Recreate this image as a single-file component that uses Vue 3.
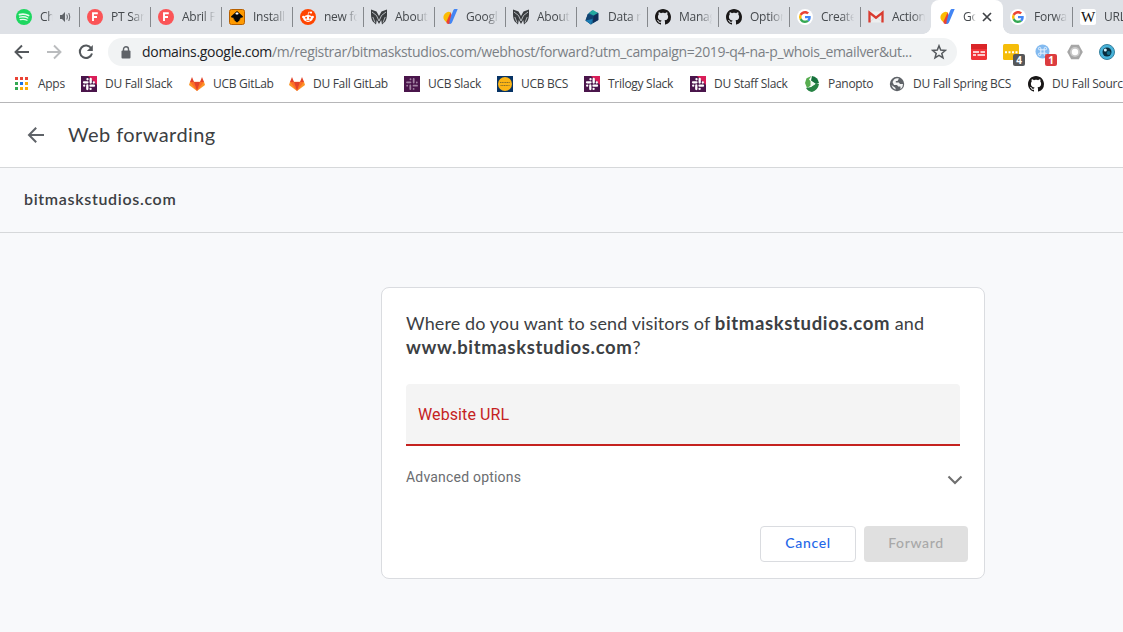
<script setup>
const tabs = [
  { icon: 'spotify', text: 'Chi', audio: true },
  { icon: 'fonts', text: 'PT Sans' },
  { icon: 'fonts', text: 'Abril Fa' },
  { icon: 'inkscape', text: 'Install' },
  { icon: 'reddit', text: 'new fo' },
  { icon: 'mask', text: 'About' },
  { icon: 'domains', text: 'Googl' },
  { icon: 'mask', text: 'About' },
  { icon: 'data', text: 'Data m' },
  { icon: 'github', text: 'Manag' },
  { icon: 'github', text: 'Option' },
  { icon: 'google', text: 'Create' },
  { icon: 'gmail', text: 'Action' },
  { icon: 'domains', text: 'Go', active: true },
  { icon: 'google', text: 'Forwar' },
  { icon: 'wiki', text: 'URL' },
]
const bookmarks = [
  { icon: 'apps', text: 'Apps', w: 67 },
  { icon: 'slack', text: 'DU Fall Slack', w: 108 },
  { icon: 'gitlab', text: 'UCB GitLab', w: 100 },
  { icon: 'gitlab', text: 'DU Fall GitLab', w: 115 },
  { icon: 'slackdim', text: 'UCB Slack', w: 93 },
  { icon: 'bcs', text: 'UCB BCS', w: 87 },
  { icon: 'slack', text: 'Trilogy Slack', w: 106 },
  { icon: 'slack', text: 'DU Staff Slack', w: 114 },
  { icon: 'panopto', text: 'Panopto', w: 85 },
  { icon: 'globe', text: 'DU Fall Spring BCS', w: 139 },
  { icon: 'github', text: 'DU Fall Sourc', w: 120 },
]
</script>

<template>
  <div class="window">
    <svg class="defs" width="0" height="0">
      <symbol id="spotify" viewBox="0 0 16 16">
        <circle cx="8" cy="8" r="8" fill="#1ed760" />
        <g fill="none" stroke="#e9fbef" stroke-linecap="round">
          <path d="M3.4 5.6Q8.2 4.2 12.6 6.5" stroke-width="1.7" />
          <path d="M3.8 8.2Q8 7 11.8 9" stroke-width="1.4" />
          <path d="M4.2 10.7Q8 9.7 11 11.3" stroke-width="1.2" />
        </g>
      </symbol>
      <symbol id="fonts" viewBox="0 0 16 16">
        <circle cx="8" cy="8" r="8" fill="#fb5457" />
        <path d="M6 12V4.3h4.8M6 8h4" fill="none" stroke="#fff" stroke-width="1.9" />
      </symbol>
      <symbol id="inkscape" viewBox="0 0 16 16">
        <rect x=".5" y=".5" width="15" height="15" rx="2" fill="#ff9a00" stroke="#b65f00" />
        <path d="M8 2 13.800 7.200q.6.900-.5 1.300l-2.500.4 1 1-1.300.5v1L8 13.500l-2.500-2v-1.100L4 10l1.200-1-2.500-.5q-1.100-.4-.5-1.300z" fill="#080808" />
        <path d="m8 3 2.200 2.200-1.200-.2-1 .9-1-.9-1.200.2z" fill="#fff" />
      </symbol>
      <symbol id="reddit" viewBox="0 0 16 16">
        <circle cx="8" cy="8" r="8" fill="#ff4500" />
        <ellipse cx="8" cy="9.4" rx="4.8" ry="3.5" fill="#fff" />
        <circle cx="3.3" cy="8" r="1.2" fill="#fff" /><circle cx="12.7" cy="8" r="1.2" fill="#fff" />
        <circle cx="11" cy="3.6" r="1.1" fill="#fff" />
        <path d="m8 6 .7-3 2.3.6" fill="none" stroke="#fff" stroke-width=".7" />
        <circle cx="6.1" cy="8.8" r=".95" fill="#ff4500" /><circle cx="9.9" cy="8.8" r=".95" fill="#ff4500" />
        <path d="M6 11q2 1.3 4 0" fill="none" stroke="#ff4500" stroke-width=".7" />
      </symbol>
      <symbol id="mask" viewBox="0 0 16 16">
        <path d="M0 .5 5.500 2.500 8 7l2.500-4.500L16 .5c.3 5-.1 9.500-1.800 12L11 15.500 10.200 11 8 15l-2.200-4-.8 4.500-3.200-3C.1 10-.3 5.500 0 .5z" fill="#3a3d40" />
        <path d="m1 3 4.500 3.500L8 12l2.500-5.500L15 3M1.800 8l2.200 5.500M14.200 8 12 13.500" fill="none" stroke="#dee1e6" stroke-width=".75" />
      </symbol>
      <symbol id="domains" viewBox="0 0 16 16">
        <path d="M8.600 3.200A5.200 5.200 0 1 0 5 13.300c1.500-.3 4.500-5.500 3.600-10.100z" fill="#fbbc04" />
        <path d="M8.700 3.200 4.600 12.300c-.6 1.500.3 2.800 1.900 2.800 1.100 0 1.700-.6 2.200-1.600l2-4.500z" fill="#ea4335" />
        <path d="M11.300 1.300C11.700.4 12.300 0 13.200 0h2.500L10.200 12.900C9.600 14.300 8.700 15 7.300 15.100L6.500 15c1.100-.4 1.500-1.500 1-2.600L9 7z" fill="#4285f4" />
      </symbol>
      <symbol id="data" viewBox="0 0 16 16">
        <path d="M8 1.500 14.300 4v7L7 15.500l-5.500-4L3.800 5z" fill="#155c87" />
        <path d="M9 1 14 4 9.300 6.500 5 4z" fill="#23a99f" /><path d="m3.800 5 5.500 1.800L7 15.500l-5.500-4z" fill="#114270" /><path d="m1.500 11.500 7-1.500L7 15.500z" fill="#1b7cb4" />
        <path d="M9.300 7 14.300 4v7L9 14z" fill="#122e58" />
      </symbol>
      <symbol id="github" viewBox="0 0 16 16">
        <path fill="#191717" d="M8 0C3.580 0 0 3.580 0 8c0 3.540 2.290 6.530 5.470 7.590.4.070.55-.17.55-.38 0-.19-.01-.82-.01-1.490-2.010.37-2.530-.49-2.690-.94-.09-.23-.48-.94-.82-1.130-.28-.15-.68-.52-.01-.53.63-.01 1.080.58 1.230.82.72 1.210 1.870.87 2.330.66.07-.52.28-.87.51-1.070-1.780-.2-3.640-.89-3.640-3.950 0-.87.31-1.590.82-2.150-.08-.2-.36-1.020.08-2.120 0 0 .67-.21 2.200.82.64-.18 1.320-.27 2-.27s1.360.09 2 .27c1.530-1.040 2.200-.82 2.200-.82.44 1.100.16 1.920.08 2.120.51.56.82 1.270.82 2.150 0 3.070-1.870 3.750-3.650 3.950.29.25.54.73.54 1.480 0 1.070-.01 1.930-.01 2.200 0 .21.15.46.55.38A8.010 8.010 0 0 0 16 8c0-4.420-3.580-8-8-8z" />
      </symbol>
      <symbol id="google" viewBox="0 0 64 64">
        <circle cx="32" cy="32" r="32" fill="#fff" />
        <g transform="translate(8 8)">
          <path fill="#EA4335" d="M24 9.500c3.540 0 6.710 1.220 9.210 3.600l6.850-6.850C35.900 2.380 30.470 0 24 0 14.620 0 6.510 5.380 2.560 13.220l7.980 6.190C12.430 13.720 17.740 9.500 24 9.500z" />
          <path fill="#4285F4" d="M46.980 24.550c0-1.570-.15-3.090-.38-4.550H24v9.020h12.940c-.58 2.960-2.260 5.480-4.780 7.180l7.730 6c4.510-4.180 7.090-10.360 7.090-17.650z" />
          <path fill="#FBBC05" d="M10.530 28.590a14.500 14.500 0 0 1 0-9.180l-7.980-6.190a24 24 0 0 0 0 21.560z" />
          <path fill="#34A853" d="M24 48c6.480 0 11.930-2.130 15.890-5.810l-7.730-6c-2.150 1.450-4.920 2.300-8.160 2.300-6.260 0-11.570-4.220-13.470-9.910l-7.980 6.190C6.510 42.620 14.620 48 24 48z" />
        </g>
      </symbol>
      <symbol id="gmail" viewBox="0 0 16 16">
        <path d="M1.500 2.500h13v11h-13z" fill="#edeeef" />
        <path d="m2 13 5-4.500L8 9.500l1-1 5 4.500" stroke="#d5d5d5" stroke-width=".7" fill="none" />
        <path d="M1.500 13.500V3.600L8 8.700l6.500-5.100v9.900" fill="none" stroke="#d93b30" stroke-width="2.300" />
      </symbol>
      <symbol id="wiki" viewBox="0 0 16 16">
        <rect width="16" height="16" rx="2.500" fill="#fff" />
        <text x="8" y="12.500" text-anchor="middle" textLength="14" lengthAdjust="spacingAndGlyphs" font-family="Liberation Serif, serif" font-size="14" fill="#111">W</text>
      </symbol>
      <symbol id="apps" viewBox="0 0 16 16">
        <path d="M1 1h3v3H1zM6 1h3v3H6zM11 1h3v3h-3z" fill="#ea4335" />
        <path d="M1 6h3v3H1zM1 11h3v3H1z" fill="#34a853" /><path d="M6 6h3v3H6z" fill="#1a73e8" />
        <path d="M11 6h3v3h-3zM6 11h3v3H6zM11 11h3v3h-3z" fill="#fbac08" />
      </symbol>
      <symbol id="slack" viewBox="0 0 16 16">
        <path d="M0 0h16v16H0z" fill="#4a154b" /><path d="M7 0h9v9z" fill="#d91e58" />
        <path d="M3 6.300h3.500M6.500 3.200v.1M9.700 3v3.500M12.800 6.500v.1M9.500 9.700H13M9.600 12.800v.1M6.300 9.500V13M3.200 9.600v.1" stroke="#fff" stroke-width="2.300" stroke-linecap="round" />
      </symbol>
      <symbol id="slackdim" viewBox="0 0 16 16">
        <path d="M0 0h16v16H0z" fill="#4a154b" />
        <path d="M3 6.300h3.500M6.500 3.200v.1M9.700 3v3.500M12.800 6.500v.1M9.500 9.700H13M9.600 12.800v.1M6.300 9.500V13M3.200 9.600v.1" stroke="#a182a2" stroke-width="1.800" stroke-linecap="round" />
      </symbol>
      <symbol id="gitlab" viewBox="0 0 16 16">
        <path d="M8 15 0 9l1-3.300h14L16 9z" fill="#fc9526" /><path d="M8 15 1 5.700h4zM8 15l7-9.300h-4z" fill="#fc6d26" />
        <path d="M5 6h6l-3 9zM1 6l2-5 2 5zM15 6l-2-5-2 5z" fill="#e24329" />
      </symbol>
      <symbol id="bcs" viewBox="0 0 16 16">
        <path d="M0 0h16v16H0z" fill="#073365" /><circle cx="8" cy="8" r="7" fill="#fdb515" />
        <path d="M3 6.500h10M3.500 9.500h9" stroke="#8b7028" stroke-width="1.200" stroke-dasharray="1.200 .5" />
      </symbol>
      <symbol id="panopto" viewBox="0 0 16 16">
        <path d="M7.500 0 2.500 2.200 1 7l2 5 4-2.500V5.500L5 3.500z" fill="#58ad50" /><path d="M8 0q6 1 7 7l-3 1-5-3.500z" fill="#16723c" />
        <path d="M15 8q-1 6-7 8-4-.5-6-4l5-1 5-3.500z" fill="#278344" /><path d="m6.500 5 4.800 3-4.800 3z" fill="#effaf0" />
      </symbol>
      <symbol id="globe" viewBox="0 0 16 16">
        <circle cx="8" cy="8" r="7.200" fill="#5f6368" />
        <path d="M5 3.500q2.500-2 5-1L8.500 5H6.800v1.500h3L11 8h3q.2 3-2.500 5.300V10.500H9.200L8 9H5L3.500 6zM2.500 9 6.500 12v1.700Q3.300 12.500 2.500 9z" fill="#f5f6f6" />
      </symbol>
    </svg>

    <div class="strip">
      <div v-for="(t, i) in tabs" :key="i" class="tab" :class="{ active: t.active, audio: t.audio, plain: i === 0 || tabs[i - 1]?.active }">
        <svg class="ico"><use :href="'#' + t.icon" /></svg>
        <span class="tab-text">{{ t.text }}</span>
        <svg v-if="t.audio" class="sound" viewBox="0 0 12 12"><path d="M1 4h2l3-3v10L3 8H1z" fill="#5f6368" /><path d="M7.800 3.500q1.200 2.500 0 5M9.800 2q2 4 0 8" fill="none" stroke="#5f6368" stroke-width="1" /></svg>
        <svg v-if="t.active" class="close" viewBox="0 0 10 10"><path d="m1 1 8 8M9 1 1 9" stroke="#3f4246" stroke-width="1.700" /></svg>
      </div>
    </div>

    <div class="toolbar">
      <svg class="nav" viewBox="0 0 16 16"><path d="M15 8H2M8 1.500 1.500 8 8 14.500" fill="none" stroke="#54585c" stroke-width="1.900" /></svg>
      <svg class="nav" viewBox="0 0 16 16"><path d="M1 8h13M8 1.500 14.500 8 8 14.500" fill="none" stroke="#babcbe" stroke-width="1.900" /></svg>
      <svg class="nav" viewBox="0 0 16 16"><path d="M13.200 4.300A6.200 6.200 0 1 0 14 9.500" fill="none" stroke="#54585c" stroke-width="2" /><path d="M14.800 1v6H8.900z" fill="#54585c" /></svg>
      <div class="omnibox">
        <svg class="lock" viewBox="0 0 10 13"><rect x=".5" y="4.500" width="9" height="8" rx="1" fill="#5f6368" /><path d="M2.500 5V3.300a2.500 2.500 0 0 1 5 0V5" fill="none" stroke="#5f6368" stroke-width="1.400" /></svg>
        <span class="host">domains.google.com</span><span class="path">/m/registrar/bitmaskstudios.com/webhost/forward?utm_campaign=2019-q4-na-p_whois_emailver&amp;ut...</span>
        <svg class="star" viewBox="0 0 16 16"><path d="m8 1.800 1.700 4.300 4.700.3-3.600 3 1.200 4.500L8 11.400l-4 2.500 1.200-4.500-3.600-3 4.700-.3z" fill="none" stroke="#55595d" stroke-width="1.500" /></svg>
      </div>
      <div class="extensions">
        <svg class="ext" viewBox="0 0 16 16"><rect width="16" height="16" rx="1.500" fill="#f03437" /><path d="M0 0h16v5H0z" fill="#da2528" /><path d="M2 8h6M9.500 8H14M2 11h3M6.500 11H14" stroke="#fff" stroke-width="1.600" /></svg>
        <div class="badged"><svg class="ext" viewBox="0 0 16 16"><rect width="16" height="16" rx="1.500" fill="#f5bd09" /><path d="M2 8.300h2M5.500 8.300h2M9 8.300h2M12.500 8.300h2" stroke="#fff" stroke-width="2" /></svg><b class="badge">4</b></div>
        <div class="badged"><svg class="ext" viewBox="0 0 16 16"><circle cx="7.500" cy="7.500" r="7" fill="#83baf0" /><path d="M5.800 5.800h3.400v3.400H5.800zM5.800 5.800V4.600a1.200 1.200 0 1 0-1.200 1.200zM9.200 5.800h1.200a1.200 1.200 0 1 0-1.200-1.200zM9.200 9.200v1.200a1.200 1.200 0 1 0 1.200-1.200zM5.800 9.200H4.600a1.200 1.200 0 1 0 1.200 1.200z" fill="none" stroke="#e7f3ff" /></svg><b class="badge red">1</b></div>
        <svg class="ext" viewBox="0 0 16 16"><path d="M4.200.8h7.600L15.800 8l-4 7.200H4.200L.2 8z" fill="#a6a6a6" /><circle cx="8" cy="8" r="5" fill="#c9c9c9" /><circle cx="8" cy="8" r="3.200" fill="#fff" /></svg>
        <svg class="ext" viewBox="0 0 16 16"><circle cx="8" cy="8" r="7.500" fill="#48b4db" stroke="#37809d" /><circle cx="8" cy="8" r="4.500" fill="#092c3c" /><circle cx="9.600" cy="9" r="2" fill="#16708d" /><circle cx="6.300" cy="6" r="1.500" fill="#d8f5ff" /></svg>
      </div>
    </div>

    <div class="bookmarks">
      <div v-for="(b, i) in bookmarks" :key="i" class="bookmark" :style="{ width: b.w + 'px' }">
        <svg class="ico"><use :href="'#' + b.icon" /></svg><span>{{ b.text }}</span>
      </div>
    </div>

    <header class="page-head">
      <svg class="back" viewBox="0 0 18 18"><path d="M17 9H2M9.200 1.700 2 9l7.200 7.300" fill="none" stroke="#5f6368" stroke-width="2" /></svg>
      <h1>Web forwarding</h1>
    </header>
    <div class="domain">bitmaskstudios.com</div>
    <main>
      <section class="card">
        <h2>Where do you want to send visitors of <b>bitmaskstudios.com</b> and<br><b>www.bitmaskstudios.com</b>?</h2>
        <div class="field">Website URL</div>
        <div class="advanced">
          <span>Advanced options</span>
          <svg class="chev" viewBox="0 0 16 10"><path d="m1.500 1.500 6.500 6.500 6.500-6.500" fill="none" stroke="#6f6f6f" stroke-width="2.100" /></svg>
        </div>
        <div class="actions"><button class="cancel">Cancel</button><button class="forward">Forward</button></div>
      </section>
    </main>
  </div>
</template>

<style>
body { margin: 0; overflow: hidden; }
</style>
<style scoped>
* { box-sizing: border-box; }
.window { width: 1123px; height: 632px; overflow: hidden; display: flex; flex-direction: column; background: #f8f9fb; font-family: "Open Sans", "Noto Sans", sans-serif; color: #3c4043; }
.defs { position: absolute; }
.ico { width: 16px; height: 16px; flex: none; }
.strip { height: 34px; flex: none; background: #dee1e6; display: flex; padding-left: 8px; overflow: hidden; }
.tab { position: relative; width: 71px; height: 34px; flex: none; display: flex; align-items: center; padding-left: 8px; gap: 8px; font-size: 12px; letter-spacing: -.25px; }
.tab::before { content: ""; position: absolute; left: 0; top: 7px; width: 1px; height: 20px; background: #85888c; }
.tab.plain::before { display: none; }
.tab:last-child { margin-left: -1px; }
.tab-text { width: 34px; overflow: hidden; white-space: nowrap; line-height: 20px; color: #45494d; mask-image: linear-gradient(to right, #000 60%, transparent 98%); }
.audio .tab-text, .active .tab-text { width: 13px; }
.sound { width: 12px; height: 12px; margin-left: -2px; margin-top: -1px; }
.tab.active { width: 72px; margin-right: -1px; background: #fff; border-radius: 8px 8px 0 0; z-index: 1; }
.tab.active::before, .tab.active::after { display: block; content: ""; position: absolute; width: 8px; height: 8px; top: 26px; left: -8px; background: radial-gradient(circle at 0 0, transparent 7.500px, #fff 8px); }
.tab.active::after { left: 72px; background: radial-gradient(circle at 100% 0, transparent 7.500px, #fff 8px); }
.close { width: 10px; height: 10px; margin-left: -2px; }
.toolbar { height: 36px; flex: none; background: #fff; display: flex; align-items: center; padding-left: 14px; }
.nav { width: 16px; height: 16px; margin-right: 16px; }
.nav:nth-child(3) { margin-right: 14px; }
.omnibox { width: 849px; height: 28px; border-radius: 14px; background: #f1f3f4; display: flex; align-items: center; padding-left: 13px; font-size: 14px; line-height: 20px; white-space: nowrap; }
.lock { width: 10px; height: 13px; margin-right: 11px; }
.host { color: #202124; letter-spacing: -.3px; }
.path { color: #7b8085; letter-spacing: -.34px; width: 659px; flex: none; }
.star { width: 16px; height: 16px; flex: none; }
.extensions { display: flex; gap: 16px; margin-left: 14px; }
.ext { width: 16px; height: 16px; display: block; }
.badged { position: relative; }
.badge { position: absolute; left: 10px; top: 10px; width: 12px; height: 12px; border-radius: 2px; background: #555759; color: #fff; font-size: 10px; line-height: 12px; text-align: center; }
.badge.red { background: #dc3c3f; }
.bookmarks { height: 33px; flex: none; background: #fff; border-bottom: 1px solid #b6b6b8; display: flex; padding: 6px 0 0 14px; overflow: hidden; font-size: 12px; }
.bookmark { flex: none; display: flex; gap: 8px; height: 16px; line-height: 16px; white-space: nowrap; letter-spacing: -.29px; }
.page-head { height: 65px; flex: none; background: #fff; border-bottom: 1px solid #d6d8da; display: flex; align-items: center; padding-left: 27px; gap: 23px; }
.back { width: 18px; height: 18px; }
h1, h2 { margin: 0; font-weight: 400; font-family: Lato, "Open Sans", sans-serif; }
h1 { font-size: 20px; line-height: 24px; letter-spacing: .42px; padding-bottom: 2px; }
.domain { height: 65px; flex: none; border-bottom: 1px solid #d6d8da; padding-left: 24px; line-height: 62px; font-family: Lato, sans-serif; font-weight: 600; font-size: 16px; letter-spacing: .68px; }
main { padding: 54px 0 0 381px; }
.card { width: 604px; height: 292px; background: #fff; border: 1px solid #dadce0; border-radius: 8px; padding: 23px 16px 16px 24px; display: flex; flex-direction: column; }
h2 { font-size: 18px; line-height: 24px; letter-spacing: .1px; white-space: nowrap; }
h2 b { font-weight: 700; font-size: 18.500px; line-height: 20px; letter-spacing: .65px; }
.field { width: 554px; height: 62px; margin-top: 25px; background: #f4f4f4; border-bottom: 2px solid #c5221f; border-radius: 4px 4px 0 0; padding-left: 12px; line-height: 61px; font-family: Roboto, sans-serif; font-size: 16px; color: #c5221f; letter-spacing: .1px; }
.advanced { display: flex; justify-content: space-between; margin-top: 21px; width: 557px; height: 20px; font-family: Roboto, sans-serif; font-size: 14px; line-height: 20px; letter-spacing: .2px; color: #6b6d70; }
.chev { width: 16px; height: 10px; margin-top: 8px; }
.actions { margin-top: auto; display: flex; justify-content: flex-end; gap: 8px; }
button { height: 36px; border-radius: 4px; padding: 0 0 3px; font: 500 14px Lato, sans-serif; letter-spacing: .65px; }
.cancel { width: 96px; background: #fff; border: 1px solid #dadce0; color: #2367e8; }
.forward { width: 104px; background: #e0e0e0; border: 0; color: #a8a8a8; }
</style>
